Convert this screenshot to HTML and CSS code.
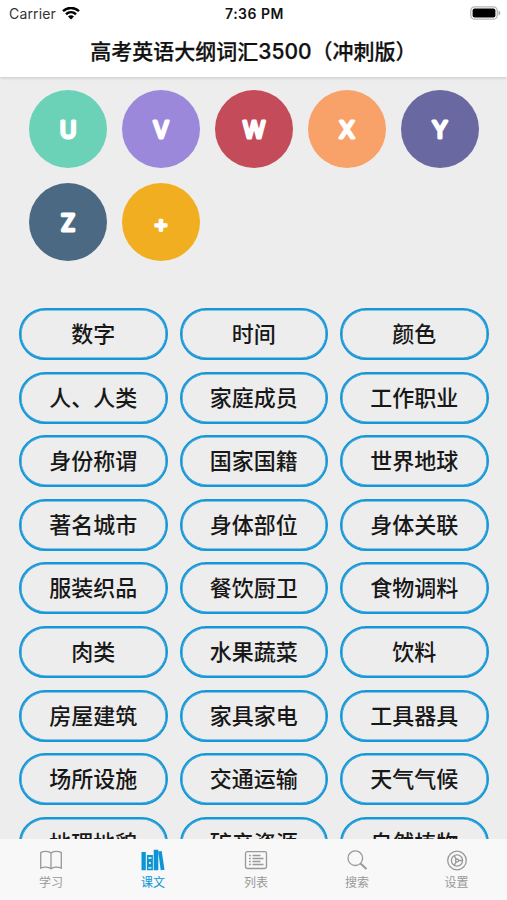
FILE: index.html
```html
<!DOCTYPE html>
<html lang="zh-CN">
<head>
<meta charset="utf-8">
<title>高考英语大纲词汇3500</title>
<link rel="stylesheet" href="styles.css">
</head>
<body>
<header class="header">
  <div class="status">
    <div class="carrier">Carrier
      <svg width="18" height="14" viewBox="0 0 18 14" fill="none" stroke="#000" stroke-width="2.5"><path d="M1 4.100C5.600-.1 12.400-.1 17 4.100M4 7.200c2.900-2.600 7.100-2.600 10 0"/><path d="M6 9.500c1.700-1.600 4.300-1.600 6 0l-3 3z" fill="#000" stroke="none"/></svg>
    </div>
    <div class="time">7:36 PM</div>
    <svg class="battery" width="31" height="14" viewBox="0 0 31 14"><rect x=".8" y=".8" width="26.4" height="12.4" rx="3.8" fill="#fff" stroke="#b5b5b5" stroke-width="1.3"/><rect x="2.6" y="2.6" width="22.8" height="8.8" rx="2"/><path d="M28.5 4.5c2.4 1 2.400 4 0 5z" fill="#aaa"/></svg>
  </div>
  <h1 class="title">高考英语大纲词汇3500（冲刺版）</h1>
</header>
<main class="content">
  <section class="letters">
    <svg class="letter mint" viewBox="0 0 78 78"><text x="39" y="48">U</text></svg>
    <svg class="letter lilac" viewBox="0 0 78 78"><text x="39" y="48">V</text></svg>
    <svg class="letter red" viewBox="0 0 78 78"><text x="39" y="48">W</text></svg>
    <svg class="letter orange" viewBox="0 0 78 78"><text x="39" y="48">X</text></svg>
    <svg class="letter violet" viewBox="0 0 78 78"><text x="39" y="48">Y</text></svg>
    <svg class="letter slate" viewBox="0 0 78 78"><text x="39" y="48">Z</text></svg>
    <svg class="letter amber" viewBox="0 0 78 78"><text class="plus" x="39" y="49">+</text></svg>
  </section>
  <section class="topics">
    <div class="topic">数字</div><div class="topic">时间</div><div class="topic">颜色</div>
    <div class="topic">人、人类</div><div class="topic">家庭成员</div><div class="topic">工作职业</div>
    <div class="topic">身份称谓</div><div class="topic">国家国籍</div><div class="topic">世界地球</div>
    <div class="topic">著名城市</div><div class="topic">身体部位</div><div class="topic">身体关联</div>
    <div class="topic">服装织品</div><div class="topic">餐饮厨卫</div><div class="topic">食物调料</div>
    <div class="topic">肉类</div><div class="topic">水果蔬菜</div><div class="topic">饮料</div>
    <div class="topic">房屋建筑</div><div class="topic">家具家电</div><div class="topic">工具器具</div>
    <div class="topic">场所设施</div><div class="topic">交通运输</div><div class="topic">天气气候</div>
    <div class="topic">地理地貌</div><div class="topic">矿产资源</div><div class="topic">自然植物</div>
  </section>
</main>
<nav class="tabs">
  <div class="tab">
    <svg width="24" height="24" viewBox="0 0 24 24"><path d="M12 5C10 2.800 4.500 2.800 1.700 4.600v15.500c3.200-1.500 8.300-1.300 10.300.8 2-2.100 7.100-2.300 10.300-.8V4.600C19.500 2.800 14 2.800 12 5v15.900"/></svg>
    <span>学习</span>
  </div>
  <div class="tab active">
    <svg width="24" height="24" viewBox="0 0 24 24"><path class="solid" d="M.5 4h4.300v18.300H.5zM5.900 7h6v15.300h-6zM12.700 1.700h4.600v20.600h-4.600zM17.300 3.500l3.400-.6 2.800 18.900-3.800.5z"/><path class="cut" d="M7.300 10h3.200M7.300 19.800h3.200"/><circle class="dot" cx="8.900" cy="15" r="1.100"/></svg>
    <span>课文</span>
  </div>
  <div class="tab">
    <svg width="24" height="24" viewBox="0 0 24 24"><rect x="1.500" y="3.700" width="21" height="16.800" rx="1.800"/><path d="M8.500 7.500h8M8.500 10.500h11M8.500 13.500h8M8.500 16.500h11M5 7.500h1.800M5 10.500h1.800M5 13.500h1.800M5 16.500h1.800"/></svg>
    <span>列表</span>
  </div>
  <div class="tab">
    <svg width="24" height="24" viewBox="0 0 24 24"><circle cx="10.300" cy="10.200" r="7.300"/><path class="handle" d="M15.500 15.500l6 5.500"/></svg>
    <span>搜索</span>
  </div>
  <div class="tab">
    <svg width="24" height="24" viewBox="0 0 24 24"><circle cx="12" cy="12.500" r="9.300"/><circle cx="12" cy="12.500" r="5.600"/><circle cx="12" cy="12.500" r="1.500"/><path d="M13.500 12.500h4M11.200 11.200l-2.100-3.500M11.200 13.800l-2.100 3.500"/></svg>
    <span>设置</span>
  </div>
</nav>
</body>
</html>
```
FILE: styles.css
```css
* { box-sizing: border-box; }
body {
  margin: 0;
  height: 900px;
  overflow: hidden;
  display: flex;
  flex-direction: column;
  background: #ededed;
  color: #181818;
  font-family: Inter, "Noto Sans CJK SC", sans-serif;
}
.header {
  flex: none;
  height: 77px;
  background: #fff;
  color: #111;
  box-shadow: 0 1px 3px rgba(0, 0, 0, .16);
}
.status {
  height: 27px;
  padding: 0 6px 0 9px;
  display: grid;
  grid-template-columns: 1fr auto 1fr;
  align-items: center;
  font-size: 14px;
}
.carrier { display: flex; align-items: center; gap: 6px; letter-spacing: .15px; color: #333; }
.time { font-weight: 600; letter-spacing: .5px; margin-right: 1px; }
.battery { justify-self: end; margin-top: -1px; }
.title {
  margin: 0;
  height: 49px;
  line-height: 49px;
  text-align: center;
  font-size: 21px;
  font-weight: 500;
  -webkit-text-stroke: .25px #111;
  white-space: nowrap;
}
.content { flex: 1; min-height: 0; overflow: hidden; padding: 13px 18px 0 19px; }
.letters {
  display: grid;
  grid-template-columns: repeat(5, 78px);
  gap: 15px;
  padding-left: 10px;
}
.letter {
  display: block;
  width: 78px;
  height: 78px;
  border-radius: 50%;
  fill: #fff;
  stroke: #fff;
  stroke-width: 3px;
  stroke-linejoin: round;
  font-size: 22.500px;
  font-weight: 400;
  text-anchor: middle;
}
.plus { font-size: 23px; font-weight: 300; }
.mint { background: #6bd1b7; }
.lilac { background: #9c88da; }
.red { background: #c44b5a; }
.orange { background: #f8a168; }
.violet { background: #6a68a0; }
.slate { background: #4b6983; }
.amber { background: #f1ae21; }
.topics {
  margin-top: 47px;
  display: grid;
  grid-template-columns: repeat(3, 148.500px);
  column-gap: 12px;
  row-gap: 11.600px;
}
.topic {
  height: 52px;
  border: 2px solid #1697d8;
  box-shadow: inset 0 0 0 .6px #1697d8;
  border-radius: 26px;
  text-align: center;
  line-height: 49px;
  font-size: 22px;
  font-weight: 500;
}
.tabs {
  flex: none;
  height: 61px;
  display: grid;
  grid-template-columns: 102px 102px 104px 98px 101px;
  background: #f8f8f8;
}
.tab {
  display: flex;
  flex-direction: column;
  align-items: center;
  padding-top: 9px;
  color: #999;
  font-size: 12px;
  line-height: 22px;
}
.tab svg { fill: none; stroke: currentColor; stroke-width: 1.300; }
.tab .solid { fill: currentColor; stroke: none; }
.tab .cut { stroke: #f8f8f8; }
.tab .dot { fill: #f8f8f8; stroke: none; }
.tab .handle { stroke-width: 2; }
.active { color: #0d94d5; }
```
